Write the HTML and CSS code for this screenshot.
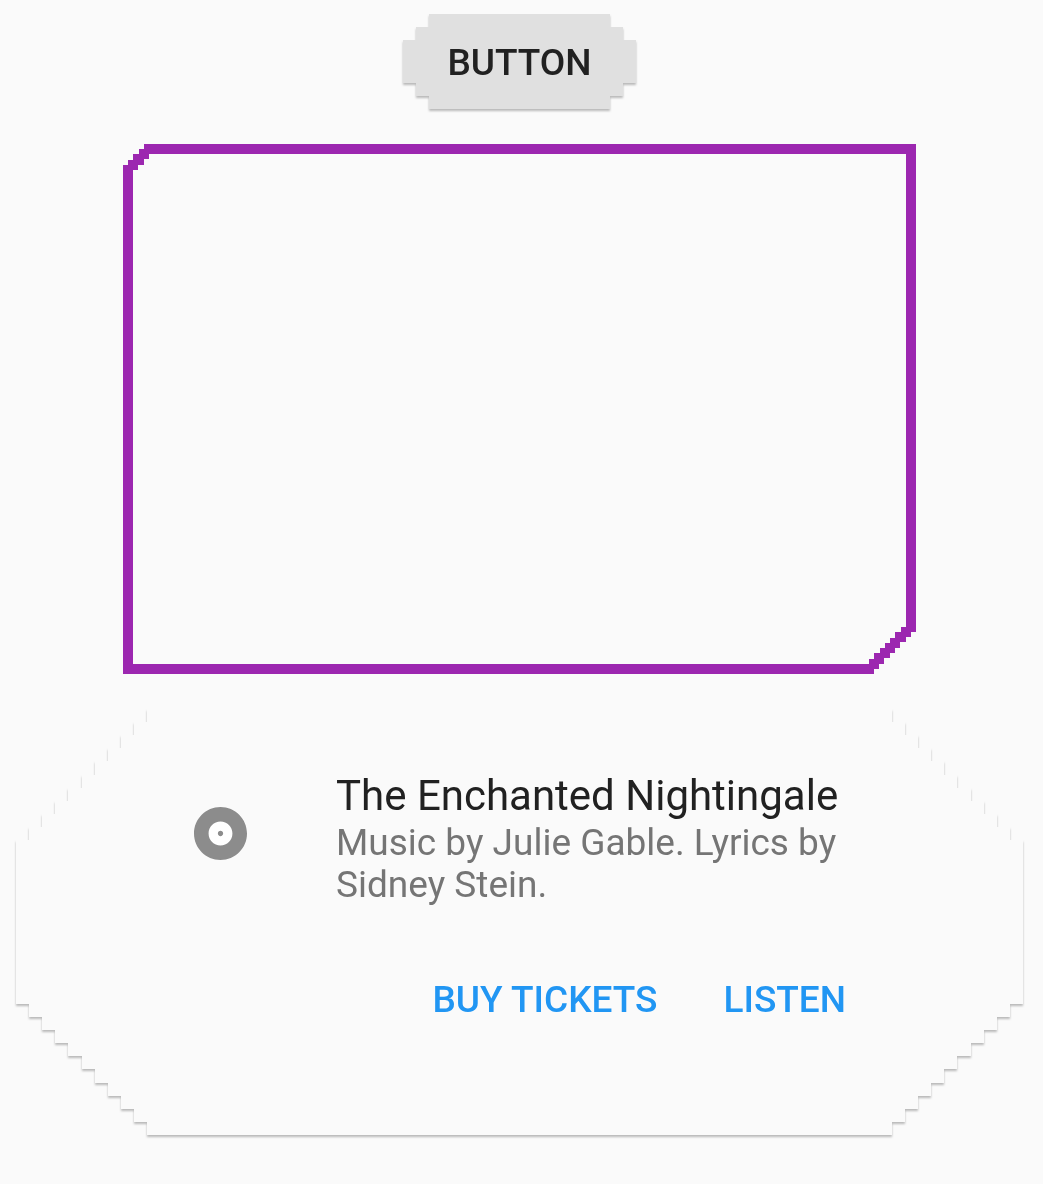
FILE: index.html
```html
<!DOCTYPE html>
<html lang="en">
<head>
  <meta charset="utf-8">
  <meta name="viewport" content="width=device-width, initial-scale=1">
  <title>Pixel borders</title>
  <link rel="stylesheet" href="styles.css">
</head>
<body>
  <main class="page">
    <div class="raised">
      <button class="pixel-button" type="button">BUTTON</button>
    </div>

    <div class="frame"></div>

    <article class="card raised">
      <div class="card-surface">
        <div class="tile">
          <svg class="album-icon" viewBox="2 2 20 20" aria-hidden="true">
            <circle cx="12" cy="12" r="6" fill="#fff"/>
            <path fill="#8c8c8c" d="M12 2C6.48 2 2 6.48 2 12s4.480 10 10 10 10-4.480 10-10S17.520 2 12 2zm0 14.500c-2.490 0-4.500-2.010-4.500-4.500S9.510 7.500 12 7.500s4.500 2.010 4.500 4.500-2.010 4.500-4.500 4.500zm0-5.500c-.55 0-1 .45-1 1s.45 1 1 1 1-.45 1-1-.45-1-1-1z"/>
          </svg>
          <div class="tile-text">
            <h1 class="title">The Enchanted Nightingale</h1>
            <p class="subtitle">Music by Julie Gable. Lyrics by Sidney Stein.</p>
          </div>
        </div>
        <div class="actions">
          <button class="text-button" type="button">BUY TICKETS</button>
          <button class="text-button" type="button">LISTEN</button>
        </div>
      </div>
    </article>
  </main>
</body>
</html>
```

FILE: styles.css
```css
* {
  box-sizing: border-box;
}

body {
  margin: 0;
  background: #fafafa;
  color: #212121;
  font-family: Roboto, "Liberation Sans", sans-serif;
}

.page {
  display: flex;
  flex-direction: column;
  align-items: center;
  gap: 35px;
  padding: 14px 20px 48px 16px;
}

/* The shadow sits on the wrapper so that it follows the clipped outline. */
.raised {
  filter: drop-shadow(0 2px 1px rgba(0, 0, 0, 0.26));
}

.pixel-button {
  display: block;
  min-width: 233px;
  padding: 27px 44px 25px;
  border: 0;
  background: #e0e0e0;
  color: #212121;
  font: 500 37px/43px Roboto, "Liberation Sans", sans-serif;
  cursor: pointer;
  clip-path: polygon(
    26px 0, calc(100% - 26px) 0,
    calc(100% - 26px) 13px, calc(100% - 13px) 13px,
    calc(100% - 13px) 26px, 100% 26px,
    100% calc(100% - 26px), calc(100% - 13px) calc(100% - 26px),
    calc(100% - 13px) calc(100% - 13px), calc(100% - 26px) calc(100% - 13px),
    calc(100% - 26px) 100%, 26px 100%,
    26px calc(100% - 13px), 13px calc(100% - 13px),
    13px calc(100% - 26px), 0 calc(100% - 26px),
    0 26px, 13px 26px,
    13px 13px, 26px 13px
  );
}

.frame {
  align-self: stretch;
  height: 530px;
  margin: 0 107px;
  padding: 10px;
  background: #9c27b0;
  clip-path: polygon(
    21px 0, 100% 0,
    100% calc(100% - 42px), calc(100% - 5px) calc(100% - 42px),
    calc(100% - 5px) calc(100% - 37px), calc(100% - 10px) calc(100% - 37px),
    calc(100% - 10px) calc(100% - 32px), calc(100% - 16px) calc(100% - 32px),
    calc(100% - 16px) calc(100% - 26px), calc(100% - 21px) calc(100% - 26px),
    calc(100% - 21px) calc(100% - 21px), calc(100% - 26px) calc(100% - 21px),
    calc(100% - 26px) calc(100% - 16px), calc(100% - 32px) calc(100% - 16px),
    calc(100% - 32px) calc(100% - 10px), calc(100% - 37px) calc(100% - 10px),
    calc(100% - 37px) calc(100% - 5px), calc(100% - 42px) calc(100% - 5px),
    calc(100% - 42px) 100%, 0 100%,
    0 21px, 5px 21px,
    5px 16px, 10px 16px,
    10px 10px, 16px 10px,
    16px 5px, 21px 5px
  );
}

.frame::before {
  content: "";
  display: block;
  height: 100%;
  background: #fafafa;
  clip-path: polygon(
    16px 0, 100% 0,
    100% calc(100% - 37px), calc(100% - 5px) calc(100% - 37px),
    calc(100% - 5px) calc(100% - 32px), calc(100% - 11px) calc(100% - 32px),
    calc(100% - 11px) calc(100% - 26px), calc(100% - 16px) calc(100% - 26px),
    calc(100% - 16px) calc(100% - 21px), calc(100% - 21px) calc(100% - 21px),
    calc(100% - 21px) calc(100% - 16px), calc(100% - 26px) calc(100% - 16px),
    calc(100% - 26px) calc(100% - 11px), calc(100% - 32px) calc(100% - 11px),
    calc(100% - 32px) calc(100% - 5px), calc(100% - 37px) calc(100% - 5px),
    calc(100% - 37px) 100%, 0 100%,
    0 16px, 5px 16px,
    5px 11px, 11px 11px,
    11px 5px, 16px 5px
  );
}

.card {
  align-self: stretch;
}

.card-surface {
  padding: 62px 136px 93px;
  background: #fafafa;
  clip-path: polygon(
    131px 0, calc(100% - 131px) 0,
    calc(100% - 131px) 13px, calc(100% - 118px) 13px,
    calc(100% - 118px) 26px, calc(100% - 105px) 26px,
    calc(100% - 105px) 39px, calc(100% - 92px) 39px,
    calc(100% - 92px) 52px, calc(100% - 79px) 52px,
    calc(100% - 79px) 66px, calc(100% - 66px) 66px,
    calc(100% - 66px) 79px, calc(100% - 52px) 79px,
    calc(100% - 52px) 92px, calc(100% - 39px) 92px,
    calc(100% - 39px) 105px, calc(100% - 26px) 105px,
    calc(100% - 26px) 118px, calc(100% - 13px) 118px,
    calc(100% - 13px) 131px, 100% 131px,
    100% calc(100% - 131px), calc(100% - 13px) calc(100% - 131px),
    calc(100% - 13px) calc(100% - 118px), calc(100% - 26px) calc(100% - 118px),
    calc(100% - 26px) calc(100% - 105px), calc(100% - 39px) calc(100% - 105px),
    calc(100% - 39px) calc(100% - 92px), calc(100% - 52px) calc(100% - 92px),
    calc(100% - 52px) calc(100% - 79px), calc(100% - 66px) calc(100% - 79px),
    calc(100% - 66px) calc(100% - 66px), calc(100% - 79px) calc(100% - 66px),
    calc(100% - 79px) calc(100% - 52px), calc(100% - 92px) calc(100% - 52px),
    calc(100% - 92px) calc(100% - 39px), calc(100% - 105px) calc(100% - 39px),
    calc(100% - 105px) calc(100% - 26px), calc(100% - 118px) calc(100% - 26px),
    calc(100% - 118px) calc(100% - 13px), calc(100% - 131px) calc(100% - 13px),
    calc(100% - 131px) 100%, 131px 100%,
    131px calc(100% - 13px), 118px calc(100% - 13px),
    118px calc(100% - 26px), 105px calc(100% - 26px),
    105px calc(100% - 39px), 92px calc(100% - 39px),
    92px calc(100% - 52px), 79px calc(100% - 52px),
    79px calc(100% - 66px), 66px calc(100% - 66px),
    66px calc(100% - 79px), 52px calc(100% - 79px),
    52px calc(100% - 92px), 39px calc(100% - 92px),
    39px calc(100% - 105px), 26px calc(100% - 105px),
    26px calc(100% - 118px), 13px calc(100% - 118px),
    13px calc(100% - 131px), 0 calc(100% - 131px),
    0 131px, 13px 131px,
    13px 118px, 26px 118px,
    26px 105px, 39px 105px,
    39px 92px, 52px 92px,
    52px 79px, 66px 79px,
    66px 66px, 79px 66px,
    79px 52px, 92px 52px,
    92px 39px, 105px 39px,
    105px 26px, 118px 26px,
    118px 13px, 131px 13px
  );
}

.tile {
  display: flex;
  align-items: flex-start;
  gap: 89px;
  padding: 0 42px;
}

.album-icon {
  flex: none;
  width: 53px;
  height: 53px;
  margin-top: 36px;
}

.title {
  margin: 0;
  font-size: 42px;
  font-weight: 400;
  line-height: 49px;
}

.subtitle {
  margin: 2px 0 0;
  color: #757575;
  font-size: 37px;
  line-height: 42px;
}

.actions {
  display: flex;
  justify-content: flex-end;
  gap: 24px;
  padding-top: 51px;
  padding-right: 20px;
}

.text-button {
  padding: 21px;
  border: 0;
  background: none;
  color: #2196f3;
  font: 500 37px/43px Roboto, "Liberation Sans", sans-serif;
  cursor: pointer;
}
```
